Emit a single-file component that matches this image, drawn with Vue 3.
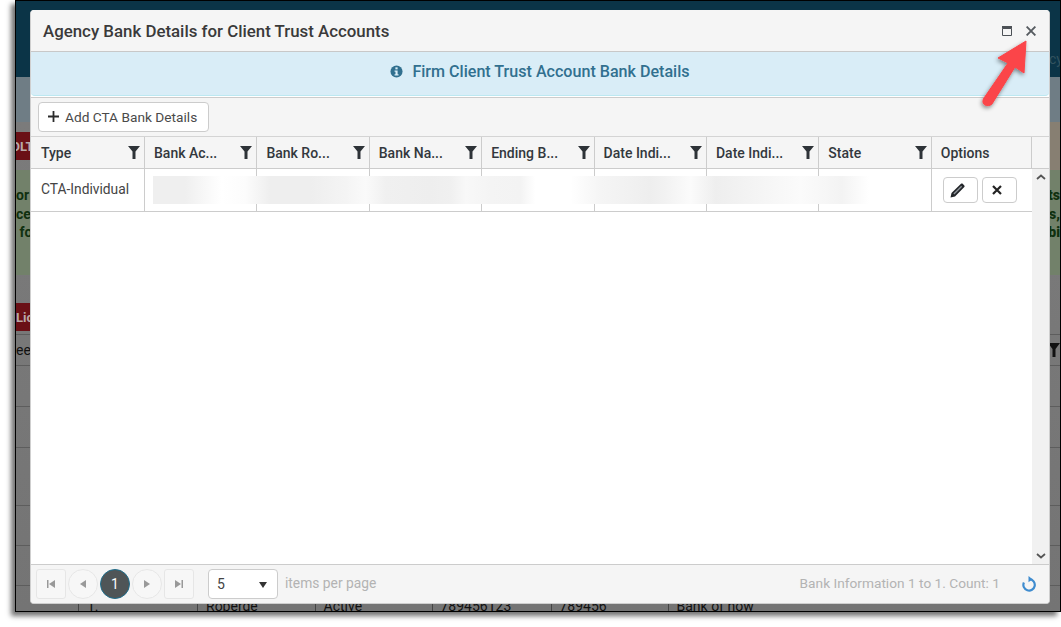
<script setup>
const cols = ['Type', 'Bank Ac...', 'Bank Ro...', 'Bank Na...', 'Ending B...', 'Date Indi...', 'Date Indi...', 'State']
const bgRows = [41, 41, 58, 40, 40]
const lastCells = ['1.', 'Roberge', 'Active', '789456123', '789456', 'Bank of how']
</script>

<template>
  <div class="page">
    <div class="frame">
      <div class="bg-top"></div>
      <div class="bg-main">
        <div class="bg-band">
          <div class="bg-red"><span class="clip">OLT</span></div>
          <div class="bg-beige"></div>
        </div>
        <div class="bg-green">
          <p><span>or a</span><b>ts</b></p>
          <p><span>cei</span><b>s,</b></p>
          <p><span>&nbsp;fo</span><b>bi</b></p>
        </div>
        <div class="bg-red two"><span>Lic</span></div>
        <div class="bg-row head"><span>ee</span><svg class="bg-filter" viewBox="0 0 12 14"><path d="M0 0h12L7.500 6v8h-3V6z" /></svg></div>
        <div v-for="(h, i) in bgRows" :key="i" class="bg-row" :style="{ height: h + 'px' }"></div>
        <div class="bg-last">
          <span v-for="c in lastCells" :key="c">{{ c }}</span>
        </div>
      </div>
      <div class="bg-cy">cy</div>
    </div>

    <section class="modal">
      <header class="title">
        <h1>Agency Bank Details for Client Trust Accounts</h1>
        <div class="win-btns">
          <svg class="maxi" viewBox="0 0 10 10"><path d="M.5 2.500h9v7h-9z" fill="none" stroke="#4c5156" /><path d="M0 0h10v2.500H0z" fill="#4c5156" /></svg>
          <svg class="closex" viewBox="0 0 10 10"><path d="M.6.6l8.800 8.800M9.400.6L.6 9.400" stroke="#565b60" stroke-width="1.900" fill="none" /></svg>
        </div>
      </header>
      <div class="info">
        <svg class="info-ico" viewBox="0 0 14 14"><circle cx="7" cy="7" r="6.500" fill="#31708f" /><rect x="5.800" y="2.500" width="2.400" height="2.200" fill="#d9edf7" /><path d="M4.900 5.800h3.300v4.100h1v1.500H4.900V9.900h1V7.300h-1z" fill="#d9edf7" /></svg>
        <span>Firm Client Trust Account Bank Details</span>
      </div>
      <div class="toolbar">
        <button class="add">
          <svg viewBox="0 0 11 11"><path d="M5.500 0v11M0 5.500h11" stroke="#2b2b2b" stroke-width="1.800" /></svg>
          <span>Add CTA Bank Details</span>
        </button>
      </div>
      <div class="grid-head">
        <div v-for="(c, i) in cols" :key="i" class="hcell">
          <span>{{ c }}</span>
          <svg viewBox="0 0 12 13"><path d="M0 0h12L7.500 5.500V13h-3V5.500z" fill="#2e3338" /></svg>
        </div>
        <div class="hcell options"><span>Options</span></div>
        <div class="hcell gutter"></div>
      </div>
      <div class="grid-body">
        <div class="rows">
          <div class="row">
            <div class="cell first">CTA-Individual</div>
            <div v-for="n in 7" :key="n" class="cell"></div>
            <div class="cell opts">
              <button class="act pen">
                <svg viewBox="0 0 15 15"><path d="M.5 14.500l1-4.500L11 .8c.6-.5 1.200-.5 1.700 0l1.600 1.600c.5.5.5 1.100 0 1.700L5 13.500z" fill="#23262a" /><path d="M3.400 10.500l7.800-7.700 1 1-7.800 7.700z" fill="#8f949a" /></svg>
              </button>
              <button class="act del">
                <svg viewBox="0 0 10 10"><path d="M1 1l8 8M9 1l-8 8" stroke="#222" stroke-width="2.200" /></svg>
              </button>
            </div>
          </div>
          <div class="blur"></div>
        </div>
        <div class="scroll">
          <svg viewBox="0 0 10 6"><path d="M1 5l4-3.500L9 5" fill="none" stroke="#555" stroke-width="1.800" /></svg>
          <svg viewBox="0 0 10 6"><path d="M1 1l4 3.500L9 1" fill="none" stroke="#555" stroke-width="1.800" /></svg>
        </div>
      </div>
      <footer class="pager">
        <button class="pg sq"><svg viewBox="0 0 8 8"><path d="M0 0h1.500v8H0zM8 0v8L2 4z" /></svg></button>
        <button class="pg rd"><svg viewBox="0 0 6 8"><path d="M6 0v8L0 4z" /></svg></button>
        <span class="cur">1</span>
        <button class="pg rd"><svg viewBox="0 0 6 8"><path d="M0 0v8l6-4z" /></svg></button>
        <button class="pg sq"><svg viewBox="0 0 8 8"><path d="M8 0H6.500v8H8zM0 0v8l6-4z" /></svg></button>
        <div class="size"><span>5</span><i></i></div>
        <span class="ipp">items per page</span>
        <span class="count">Bank Information 1 to 1. Count: 1</span>
        <svg class="refresh" viewBox="0 0 16 16"><path d="M8.500 3.200A5.700 5.700 0 1 1 2.900 6.500" fill="none" stroke="#3f8ccf" stroke-width="2.200" /><path d="M7.500 0v6.300l4-3.100z" fill="#3f8ccf" /></svg>
      </footer>
    </section>

    <svg class="arrow" viewBox="0 0 60 80">
      <defs><filter id="as" x="-30%" y="-30%" width="170%" height="170%"><feDropShadow dx="-1" dy="2" stdDeviation="2" flood-color="#000" flood-opacity=".45" /></filter></defs>
      <path d="M49 3L21 20l10 5L7 60c-2 3-1 6 1 7s5 1 7-1L38 29l9 6z" fill="#fb4448" stroke="#fb4448" stroke-width="1" stroke-linejoin="round" filter="url(#as)" />
    </svg>
  </div>
</template>

<style>
html, body { margin: 0; background: #fff; overflow: hidden; }
</style>

<style scoped>
.page { position: relative; width: 1061px; height: 627px; overflow: hidden; background: #fff; font-family: Roboto, "Liberation Sans", sans-serif; }
.frame { position: relative; margin-left: 15px; width: 1046px; height: 612px; box-sizing: border-box; border: 1px solid #000; background: #747474; display: flex; flex-direction: column; box-shadow: -4px 4px 5px rgba(0,0,0,.55); overflow: hidden; }
.bg-top { height: 76px; background: #0b3447; flex: none; }
.bg-main { flex: 1; min-height: 0; display: flex; flex-direction: column; padding-top: 55px; background: linear-gradient(#6f7d85 0, #6f7d85 45px, #7b7b7b 45px, #747474 100%); color: #111; font: 700 14px Roboto, sans-serif; }
.bg-band { display: flex; justify-content: space-between; flex: none; height: 28px; }
.bg-red { background: #6a1016; height: 28px; width: 300px; color: #b9a9a9; display: flex; align-items: center; flex: none; overflow: hidden; font-size: 13px; }
.clip { margin-left: -5px; }
.bg-beige { width: 60px; height: 48px; margin-top: -10px; background: #877f72; }
.bg-green { position: relative; margin-top: 10px; height: 105px; flex: none; background: #72816a; color: #10300f; line-height: 18.500px; padding-top: 16px; box-sizing: border-box; }
.bg-green p { margin: 0; display: flex; justify-content: space-between; }
.bg-red.two { margin-top: 28px; }
.bg-row { flex: none; box-sizing: border-box; border-bottom: 1px solid #5d5d5d; display: flex; justify-content: space-between; align-items: center; font: 400 14px Roboto, sans-serif; color: #111; }
.bg-row.head { height: 32px; border-top: 1px solid #5d5d5d; margin-top: 3px; }
.bg-filter { width: 12px; height: 14px; fill: #111; }
.bg-cy { position: absolute; left: 1033px; top: 50px; color: #33535f; font: 14px Roboto, sans-serif; }
.bg-last { margin-top: auto; height: 18px; flex: none; box-sizing: border-box; padding-left: 62px; display: grid; grid-template-columns: 119px 117.500px 117px 119px 117px 1fr; font: 400 14px/26px Roboto, sans-serif; color: #111; overflow: hidden; }
.bg-last span { border-left: 1px solid #444; padding-left: 8px; }

.modal { position: absolute; left: 30px; top: 10px; width: 1020px; height: 594px; background: #fff; border-radius: 4px; box-sizing: border-box; border: 1px solid #cfcfcf; border-width: 0 1px 1px 1px; display: flex; flex-direction: column; overflow: hidden; color: #2e3338; }
.title { flex: none; height: 42px; background: #f5f5f5; border-bottom: 1px solid #c8c8c8; box-sizing: border-box; display: flex; align-items: center; justify-content: space-between; padding: 1px 13px 0 12px; }
h1 { margin: 0; font-size: 16.850px; font-weight: 500; color: #3a3a3a; }
.win-btns { display: flex; align-items: center; gap: 14px; margin-top: -1px; }
.maxi { width: 10px; height: 10px; }
.closex { width: 10px; height: 10px; }
.info { flex: none; height: 44px; padding-bottom: 5px; background: #d9edf7; border-bottom: 1px solid #bce8f1; box-sizing: border-box; display: flex; align-items: center; justify-content: center; gap: 9px; color: #31708f; font-size: 16.100px; font-weight: 500; border-radius: 0 0 4px 4px; }
.info-ico { width: 13px; height: 13px; }
.toolbar { flex: none; height: 40px; background: #f5f5f5; border-top: 1px solid #ccc; border-bottom: 1px solid #d4d4d4; box-sizing: border-box; padding: 4px 7px; margin-top: 1px; }
.add { height: 30px; width: 171px; box-sizing: border-box; background: #fff; border: 1px solid #ccc; border-radius: 4px; display: flex; align-items: center; gap: 6px; padding: 0 9px 1px; font: 13.700px Roboto, sans-serif; color: #4a4a4a; white-space: nowrap; }
.add svg { width: 11px; height: 11px; flex: none; }
.grid-head { flex: none; height: 32px; display: grid; grid-template-columns: 114px repeat(7, 112.400px) 100px 1fr; background: #f5f5f5; border-bottom: 1px solid #ccc; box-sizing: border-box; }
.hcell { border-right: 1px solid #ccc; display: flex; align-items: center; justify-content: space-between; padding: 0 4px 0 9px; font-size: 14px; font-weight: 500; color: #33383d; box-sizing: border-box; }
.hcell:first-child { padding-left: 10px; }
.hcell svg { width: 12px; height: 13px; }
.hcell.gutter { border-right: 0; }
.grid-body { flex: 1; display: flex; min-height: 0; }
.rows { flex: 1; position: relative; }
.row { height: 43px; display: grid; grid-template-columns: 114px repeat(7, 112.400px) 1fr; border-bottom: 1px solid #ccc; box-sizing: border-box; }
.cell { border-right: 1px solid #ccc; box-sizing: border-box; font-size: 13.800px; color: #444; display: flex; align-items: center; padding-left: 9px; }
.cell.first { padding: 0 0 2px 10px; }
.cell.opts { border-right: 0; gap: 4px; padding-left: 11px; }
.act { width: 35px; height: 26px; background: #fff; border: 1px solid #ccc; border-radius: 4px; display: flex; align-items: center; justify-content: center; box-sizing: border-box; }
.act.pen { padding: 0 5px 0 0; }
.act.del { padding: 0 4px 0 0; }
.act.pen svg { width: 15px; height: 15px; }
.act.del svg { width: 10px; height: 10px; }
.blur { position: absolute; left: 122px; top: 7px; width: 716px; height: 28px; background: linear-gradient(90deg, #efefef 0%, #efefef 4.500%, #f8f8f8 7.300%, #fff 9.600%, #fcfcfc 12.900%, #eee 16.400%, #eee 22%, #f4f4f4 26.900%, #fafafa 29.700%, #f0f0f0 32.500%, #eee 38.700%, #f0f0f0 41.600%, #f8f8f8 43.700%, #f4f4f4 47.100%, #f3f3f3 51.300%, #fff 53.400%, #fff 58.300%, #f5f5f5 62.500%, #eee 69.500%, #f2f2f2 71.600%, #fbfbfb 75.100%, #eee 78.600%, #f5f5f5 84.900%, #fbfbfb 90.500%, #f3f3f3 96.200%, #fff 100%); }
.scroll { width: 17px; flex: none; background: #f1f1f1; display: flex; flex-direction: column; justify-content: space-between; align-items: center; padding: 5px 0; box-sizing: border-box; }
.scroll svg { width: 10px; height: 6px; }
.pager { flex: none; height: 39px; background: #f5f5f5; border-top: 1px solid #ccc; box-sizing: border-box; display: flex; align-items: center; padding: 0 5px; font-size: 13.800px; color: #b3b3b3; }
.pg { width: 30px; height: 30px; background: #f7f7f7; border: 1px solid #e6e6e6; box-sizing: border-box; padding: 0; display: flex; align-items: center; justify-content: center; margin-right: 2px; }
.pg.sq { border-radius: 3px; }
.pg.rd { border-radius: 50%; }
.pg svg { height: 8px; width: 8px; fill: #999; }
.cur { width: 30px; height: 30px; box-sizing: border-box; border-radius: 50%; background: #4f5557; border: 1px solid #1f6e8c; color: #fff; display: flex; align-items: center; justify-content: center; margin-right: 2px; }
.size { margin-left: 12px; width: 70px; height: 30px; box-sizing: border-box; background: #fff; border: 1px solid #ccc; border-radius: 4px; display: flex; align-items: center; justify-content: space-between; padding: 0 10px 0 8px; color: #444; font-size: 14px; }
.size i { width: 0; height: 0; border: solid transparent; border-width: 6px 4.500px 0; border-top-color: #333; margin-top: 2px; }
.ipp { margin-left: 7px; padding-bottom: 2px; }
.count { margin-left: auto; margin-right: 21px; padding-bottom: 2px; font-size: 13.700px; }
.refresh { width: 16px; height: 16px; margin-right: 7px; }
.arrow { position: absolute; left: 977px; top: 38px; width: 60px; height: 80px; overflow: visible; }
</style>
